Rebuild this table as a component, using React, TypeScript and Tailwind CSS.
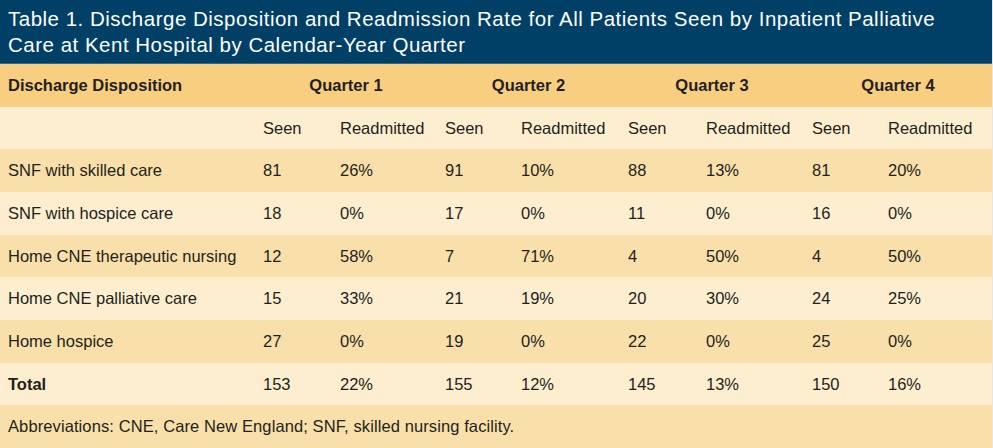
const rows = [
  { label: 'SNF with skilled care', v: ['81', '26%', '91', '10%', '88', '13%', '81', '20%'] },
  { label: 'SNF with hospice care', v: ['18', '0%', '17', '0%', '11', '0%', '16', '0%'] },
  { label: 'Home CNE therapeutic nursing', v: ['12', '58%', '7', '71%', '4', '50%', '4', '50%'] },
  { label: 'Home CNE palliative care', v: ['15', '33%', '21', '19%', '20', '30%', '24', '25%'] },
  { label: 'Home hospice', v: ['27', '0%', '19', '0%', '22', '0%', '25', '0%'] },
]

const cols = 'grid grid-cols-[255px_77px_105px_76px_107px_78px_106px_76px_1fr] items-center flex-1'

export default function App() {
  return (
    <div
      className="w-[993px] h-[448px] flex flex-col text-[#231f20] text-[16.5px] overflow-hidden border-r border-[#e6e6e6]"
      style={{ fontFamily: '"Liberation Sans", Arial, sans-serif' }}
    >
      {/* title */}
      <div className="h-[64px] shrink-0 bg-[#003f66] border-b border-[#3a6680] flex flex-col justify-center px-2 pt-[1px] text-white text-[20.5px] leading-[26px] tracking-[0.5px]">
        <div>Table 1. Discharge Disposition and Readmission Rate for All Patients Seen by Inpatient Palliative</div>
        <div>Care at Kent Hospital by Calendar-Year Quarter</div>
      </div>

      {/* quarter header */}
      <div className="grid grid-cols-[255px_182px_183px_184px_1fr] items-center flex-1 bg-[#f8cf80] font-bold">
        <div className="pl-2">Discharge Disposition</div>
        <div className="text-center">Quarter 1</div>
        <div className="text-center">Quarter 2</div>
        <div className="text-center">Quarter 3</div>
        <div className="text-center">Quarter 4</div>
      </div>

      {/* sub header */}
      <div className={`${cols} bg-[#fdeecf]`}>
        <div />
        {[1, 2, 3, 4].map(q => (
          <>
            <div key={`s${q}`} className="pl-2">Seen</div>
            <div key={`r${q}`} className="pl-2">Readmitted</div>
          </>
        ))}
      </div>

      {rows.map((r, i) => (
        <div key={r.label} className={`${cols} ${i % 2 === 0 ? 'bg-[#f9e0aa]' : 'bg-[#fdeecf]'}`}>
          <div className="pl-2">{r.label}</div>
          {r.v.map((x, j) => (
            <div key={j} className="pl-2">{x}</div>
          ))}
        </div>
      ))}

      <div className={`${cols} bg-[#fdeecf]`}>
        <div className="pl-2 font-bold">Total</div>
        {['153', '22%', '155', '12%', '145', '13%', '150', '16%'].map((x, j) => (
          <div key={j} className="pl-2">{x}</div>
        ))}
      </div>

      {/* footnote */}
      <div className="flex-1 flex items-center bg-[#f9e0aa] pl-2 tracking-[0.1px]">
        Abbreviations: CNE, Care New England; SNF, skilled nursing facility.
      </div>
    </div>
  )
}
